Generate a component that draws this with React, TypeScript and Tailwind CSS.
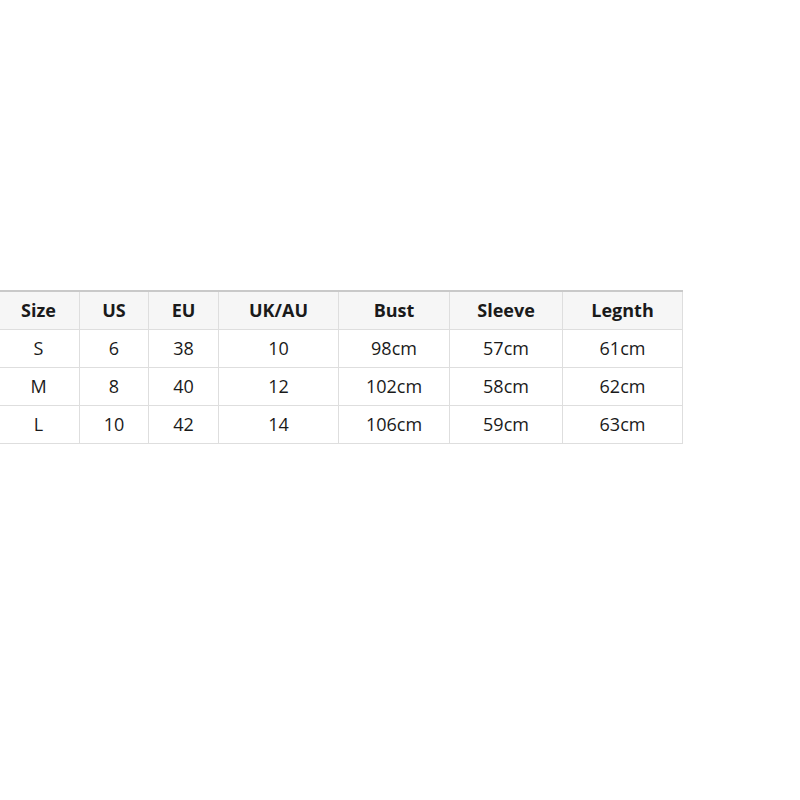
const headers = ['Size', 'US', 'EU', 'UK/AU', 'Bust', 'Sleeve', 'Legnth'];
const widths = ['w-[82px]', 'w-[69px]', 'w-[70px]', 'w-[120px]', 'w-[111px]', 'w-[113px]', 'w-[120px]'];

const rows = [
  ['S', '6', '38', '10', '98cm', '57cm', '61cm'],
  ['M', '8', '40', '12', '102cm', '58cm', '62cm'],
  ['L', '10', '42', '14', '106cm', '59cm', '63cm'],
];

export default function App() {
  return (
    <div className="w-[800px] h-[800px] bg-white pt-[290px] font-['Open_Sans',sans-serif] text-[18px] leading-[24px] text-[#1a1a1a]">
      <table className="ml-[-3px] border-collapse table-fixed border-t-2 border-t-[#c9c9c9]">
        <thead>
          <tr className="bg-[#f6f6f6] h-[38px]">
            {headers.map((h, i) => (
              <th key={h} className={`${widths[i]} border border-[#dedede] border-t-0 font-bold text-center p-0`}>
                {h}
              </th>
            ))}
          </tr>
        </thead>
        <tbody>
          {rows.map((r) => (
            <tr key={r[0]} className="h-[38px]">
              {r.map((c, i) => (
                <td key={i} className={`${widths[i]} border border-[#dedede] text-center p-0`}>
                  {c}
                </td>
              ))}
            </tr>
          ))}
        </tbody>
      </table>
    </div>
  );
}
